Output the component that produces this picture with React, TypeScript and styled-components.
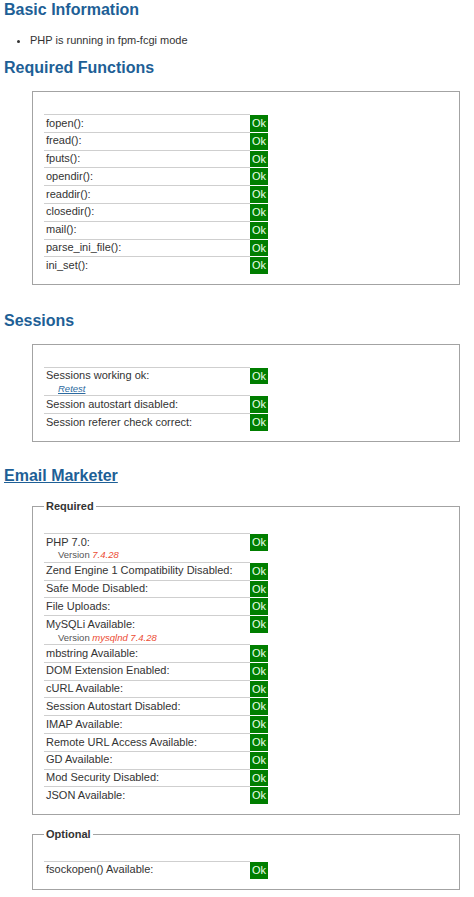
import React from "react";
import styled, { createGlobalStyle } from "styled-components";

const GlobalStyle = createGlobalStyle`
  body {
    margin: 0;
    background: #ffffff;
    color: #333333;
    font-family: "Liberation Sans", Arial, sans-serif;
    font-size: 11px;
  }
`

const Page = styled.div`
  padding: 1px 4px 8px;
`

const Heading = styled.h2<{ $afterBox?: boolean }>`
  margin: ${p => (p.$afterBox ? "26.5px" : "0")} 0 14px;
  font-size: 16px;
  line-height: 18px;
  font-weight: bold;
  color: #1e5f96;
`

const LinkHeading = styled(Heading)`
  margin: 25px 0 15px;

  a {
    color: inherit;
    text-decoration: underline;
  }
`

const InfoList = styled.ul`
  margin: 15px 0 12px;
  padding-left: 26px;
  line-height: 13px;
`

const Box = styled.div`
  box-sizing: border-box;
  width: 428px;
  margin-left: 28px;
  padding: 22px 11px 10px;
  border: 1px solid #a3a3a3;
`

const Group = styled.fieldset`
  box-sizing: border-box;
  width: 428px;
  min-width: 0;
  margin: 0 0 0 28px;
  padding: 20px 11px 10px;
  border: 1px solid #a3a3a3;

  & + & {
    margin-top: 12.5px;
  }
`

const Legend = styled.legend`
  padding: 0 2px;
  font-weight: bold;
  line-height: 13px;
  color: #333333;
`

const Row = styled.div`
  display: flex;
  align-items: flex-start;
`

const Label = styled.div`
  box-sizing: border-box;
  width: 206px;
  padding: 1.5px 2px;
  border-top: 1px solid #cfcfcf;
  line-height: 13.8px;
`

const Ok = styled.span`
  display: block;
  box-sizing: border-box;
  width: 18px;
  height: 16.8px;
  margin-top: 1px;
  padding: 0 2px;
  line-height: 16.8px;
  background: #007e00;
  color: #ecffec;
`

const Note = styled.div`
  padding-left: 12px;
  font-size: 9.5px;
  line-height: 11px;
  color: #555555;
`

const NoteValue = styled.em`
  color: #ec4b32;
`

const Retest = styled.a`
  font-style: italic;
  color: #2c6aa0;
  text-decoration: underline;
`

type Check = { label: string; note?: React.ReactNode };

const functions: Check[] = [
  "fopen():", "fread():", "fputs():", "opendir():", "readdir():",
  "closedir():", "mail():", "parse_ini_file():", "ini_set():",
].map(label => ({ label }));

const sessions: Check[] = [
  { label: "Sessions working ok:", note: <Retest href="#">Retest</Retest> },
  { label: "Session autostart disabled:" },
  { label: "Session referer check correct:" },
];

const required: Check[] = [
  { label: "PHP 7.0:", note: <>Version <NoteValue>7.4.28</NoteValue></> },
  { label: "Zend Engine 1 Compatibility Disabled:" },
  { label: "Safe Mode Disabled:" },
  { label: "File Uploads:" },
  { label: "MySQLi Available:", note: <>Version <NoteValue>mysqlnd 7.4.28</NoteValue></> },
  { label: "mbstring Available:" },
  { label: "DOM Extension Enabled:" },
  { label: "cURL Available:" },
  { label: "Session Autostart Disabled:" },
  { label: "IMAP Available:" },
  { label: "Remote URL Access Available:" },
  { label: "GD Available:" },
  { label: "Mod Security Disabled:" },
  { label: "JSON Available:" },
];

const optional: Check[] = [{ label: "fsockopen() Available:" }];

const CheckRows = ({ items }: { items: Check[] }) => (
  <>
    {items.map(item => (
      <Row key={item.label}>
        <Label>
          {item.label}
          {item.note ? <Note>{item.note}</Note> : null}
        </Label>
        <Ok>Ok</Ok>
      </Row>
    ))}
  </>
);

export default function App() {
  return (
    <Page>
      <GlobalStyle />
      <Heading>Basic Information</Heading>
      <InfoList>
        <li>PHP is running in fpm-fcgi mode</li>
      </InfoList>

      <Heading>Required Functions</Heading>
      <Box>
        <CheckRows items={functions} />
      </Box>

      <Heading $afterBox>Sessions</Heading>
      <Box>
        <CheckRows items={sessions} />
      </Box>

      <LinkHeading>
        <a href="#">Email Marketer</a>
      </LinkHeading>
      <Group>
        <Legend>Required</Legend>
        <CheckRows items={required} />
      </Group>
      <Group>
        <Legend>Optional</Legend>
        <CheckRows items={optional} />
      </Group>
    </Page>
  );
}
